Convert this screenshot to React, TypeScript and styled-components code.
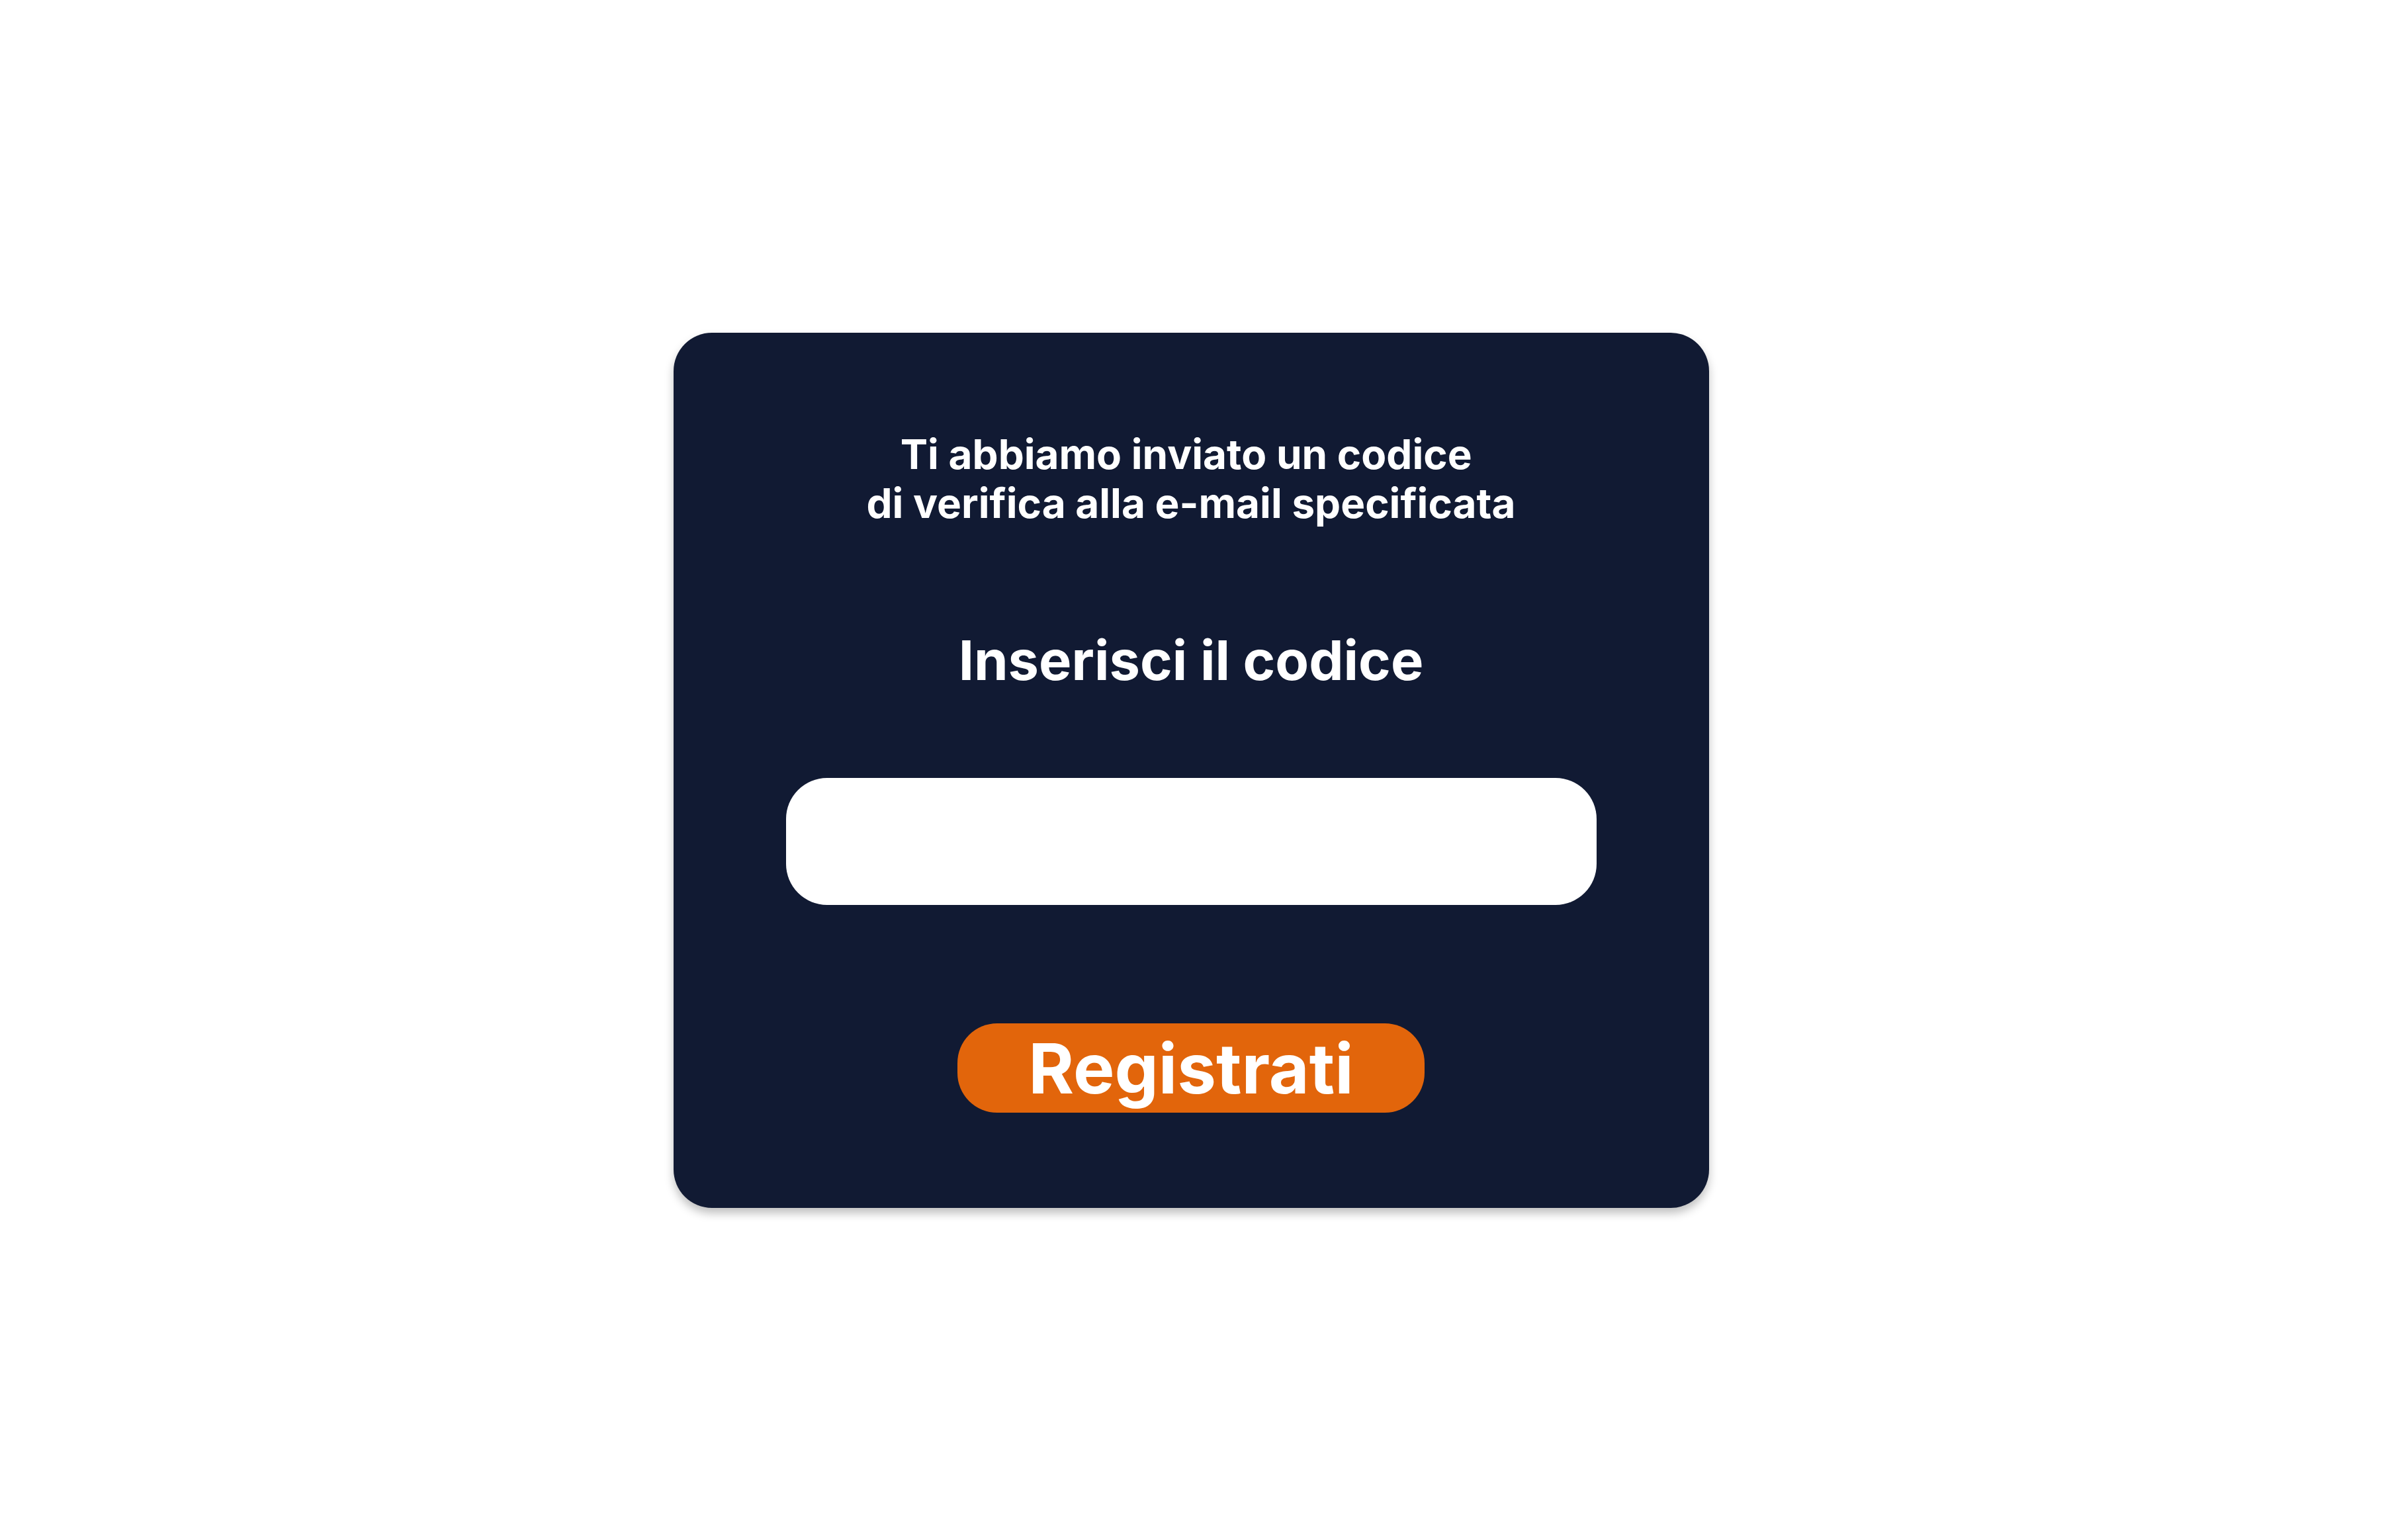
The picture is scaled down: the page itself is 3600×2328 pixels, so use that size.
import React from 'react';
import styled, { createGlobalStyle } from 'styled-components';

const GlobalStyle = createGlobalStyle`
  * {
    box-sizing: border-box;
  }
  body {
    margin: 0;
    background: #ffffff;
    font-family: Inter, 'Noto Sans', sans-serif;
  }
`;

const Page = styled.div`
  display: flex;
  align-items: center;
  justify-content: center;
  min-height: 100vh;
`;

const Card = styled.div`
  display: flex;
  flex-direction: column;
  align-items: center;
  width: 1565px;
  height: 1323px;
  padding-top: 147px;
  background: #111a33;
  border-radius: 58px;
  box-shadow: 0 8px 14px rgba(0, 0, 0, 0.25);
`;

const Message = styled.p`
  margin: 0;
  color: #ffffff;
  font-size: 62px;
  font-weight: 700;
  line-height: 74px;
  text-align: center;
`;

const Heading = styled.h2`
  margin: 154px 0 0;
  color: #ffffff;
  font-size: 83px;
  font-weight: 700;
  line-height: 92px;
`;

const CodeInput = styled.input`
  width: 1225px;
  height: 192px;
  margin-top: 132px;
  padding: 0 60px;
  border: none;
  border-radius: 62px;
  background: #ffffff;
  font-family: inherit;
  font-size: 70px;
  outline: none;
`;

const SubmitButton = styled.button`
  width: 706px;
  height: 135px;
  margin-top: 179px;
  padding: 0;
  border: none;
  border-radius: 60px;
  background: #e2650b;
  color: #ffffff;
  font-family: inherit;
  font-size: 105px;
  font-weight: 700;
  line-height: 135px;
  cursor: pointer;
`;

const App = () => {
  return (
    <>
      <GlobalStyle />
      <Page>
        <Card>
          <Message>
            Ti abbiamo inviato un codice{'\u00a0'}
            <br />
            di verifica alla e-mail specificata
          </Message>
          <Heading>Inserisci il codice</Heading>
          <CodeInput type="text" />
          <SubmitButton>Registrati</SubmitButton>
        </Card>
      </Page>
    </>
  );
};

export default App;
